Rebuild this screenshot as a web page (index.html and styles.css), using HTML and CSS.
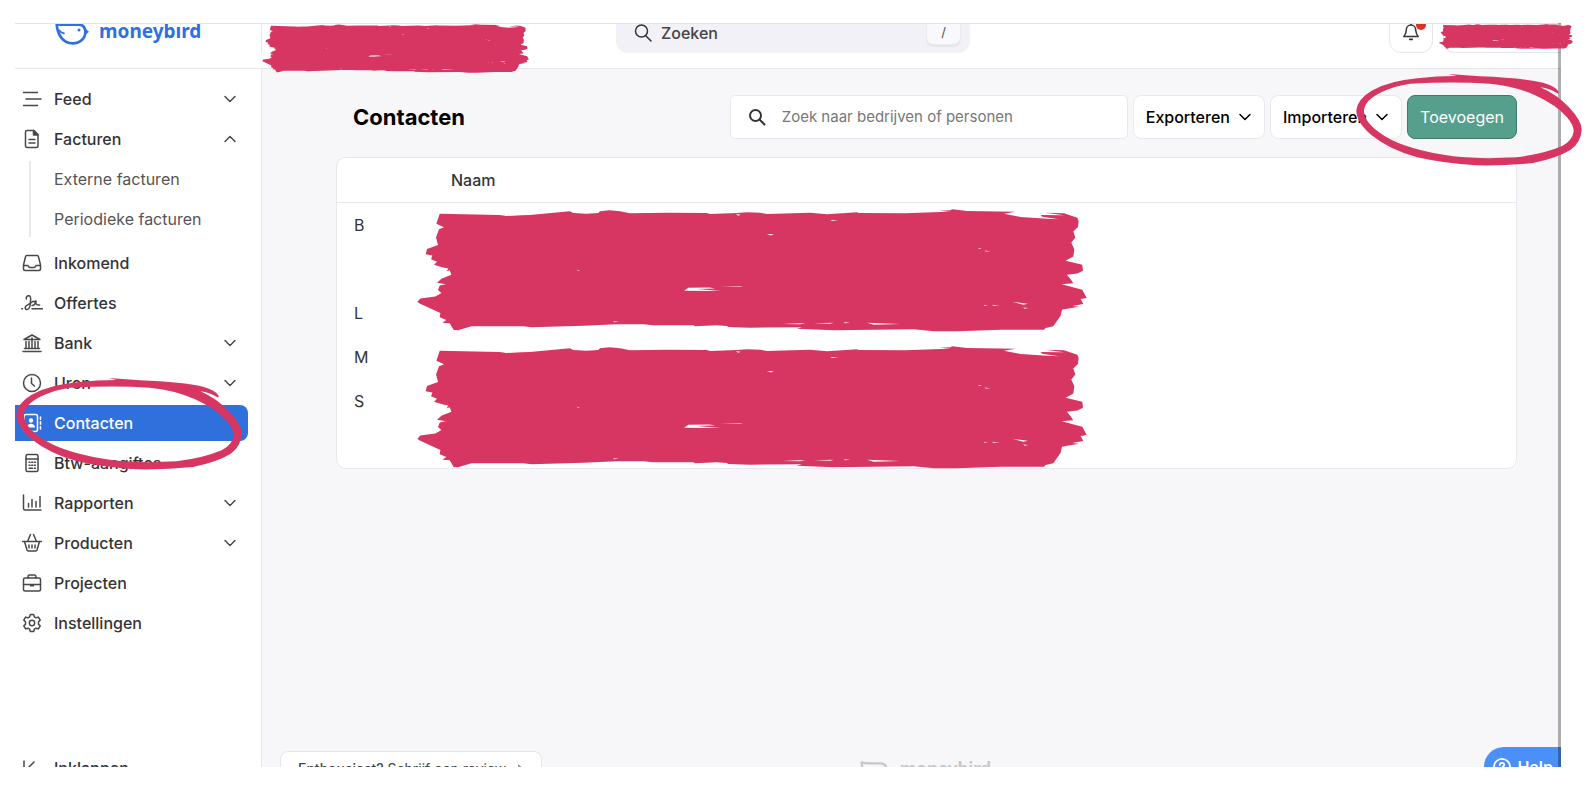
FILE: index.html
```html
<!DOCTYPE html>
<html lang="nl">
<head>
<meta charset="utf-8">
<meta name="viewport" content="width=device-width, initial-scale=1">
<title>Contacten - Moneybird</title>
<link rel="stylesheet" href="styles.css">
</head>
<body>
<svg class="defs" aria-hidden="true">
  <symbol id="bird" viewBox="0 0 102 69">
    <path fill="none" stroke="currentColor" stroke-width="8" stroke-linejoin="round" d="M5 5C18 10 34 8 50 8H70C83 8 90 16 91 27C92 50 75 64 53 64C25 64 7 40 5 5Z"/>
    <path fill="currentColor" d="M91 20L102 29L91 38Z"/>
    <path fill="none" stroke="currentColor" stroke-width="5" stroke-linecap="round" d="M12 24C16 31 21 33 27 34"/>
    <circle cx="72" cy="24" r="4.500" fill="currentColor"/>
  </symbol>
  <symbol id="chev" viewBox="0 0 14 14"><path d="M2 4.500 7 9.500l5-5"/></symbol>
  <symbol id="brush" viewBox="52 54 2007 370" preserveAspectRatio="none">
    <path fill-rule="evenodd" d="M120 68L300 72 320 75 365 73 390 72 510 61 520 66 560 68 595 66 600 61 628 58 660 61 690 67 800 65 920 66 930 69 1010 66 1040 64 1080 65 1100 69 1230 65 1280 70 1370 64 1375 66 1515 67 1620 63 1650 62 1617 59 1650 58 1655 55 1700 60 1845 62 1810 68 1860 78 1940 83 1975 85 1925 77 1920 72 1990 73 1935 65 1990 67 2030 80 2034 90 2032 108 2018 122 2024 140 2012 155 2021 175 2018 197 1995 210 2045 222 2047 240 2030 248 1999 252 2010 265 2018 277 1983 280 2045 297 2058 322 2040 325 2048 340 2015 346 2035 348 2000 354 1984 357 1980 375 1958 407 1935 412 1930 417 1800 417 1670 422 1600 422 1540 416 1300 419 1190 414 1205 410 1050 411 985 409 980 406 950 404 885 407 880 404 760 404 730 401 650 401 550 405 395 410 370 407 215 407 175 419 162 418 150 398 128 396 140 388 120 380 122 367 60 338 53 333 62 323 107 317 125 307 115 298 120 284 138 280 112 276 125 264 155 252 150 238 140 242 146 233 130 230 103 222 112 213 94 205 98 194 78 190 82 174 115 162 109 140 118 115 133 109 110 98Z
    M852 300L865 291 928 290 945 293 890 295 962 301ZM958 286L1028 287 1020 289ZM640 392L656 393 642 395ZM532 237L540 238 534 240ZM1100 129L1121 130 1112 134ZM1145 400L1215 397 1200 401ZM1240 398L1300 396 1290 399ZM1330 395L1350 396 1334 398ZM1400 396L1500 400 1420 402ZM1750 342L1762 344 1752 345ZM1775 342L1798 345 1778 345ZM1835 333L1882 339 1868 342ZM1868 350L1883 352 1872 354ZM1733 171L1744 173 1736 174ZM1752 179L1770 181 1756 182ZM1290 87L1313 88 1296 90ZM1007 69L1022 71 1014 74Z"/>
  </symbol>
  <symbol id="ring" viewBox="78 222 679 276" preserveAspectRatio="none">
    <path fill-rule="evenodd" d="M357 222L450 229Q580 234 640 248Q680 260 687 275Q686 284 682 279Q660 266 632 262Q682 284 718 322Q757 364 756 390Q754 428 722 450Q680 475 610 489Q520 498 440 496Q340 490 262 472Q180 450 125 406Q78 366 79 330Q84 296 125 272Q180 242 262 235Q320 228 380 228ZM240 251Q370 244 480 251Q560 259 616 286Q680 315 712 352Q733 377 732 395Q728 421 696 439Q638 463 560 472Q450 478 370 469Q232 450 165 409Q99 368 102 330Q106 300 154 277Q192 258 240 251Z"/>
  </symbol>
</svg>

<div class="frame">
  <header class="topbar">
    <a class="brand" href="#"><svg class="bird"><use href="#bird"/></svg><span>moneybırd</span></a>
    <label class="quick">
      <svg class="ico" viewBox="0 0 20 20"><circle cx="8.500" cy="8" r="6"/><path d="M12.500 12.500 18 18"/></svg>
      <input type="text" placeholder="Zoeken" aria-label="Zoeken">
      <kbd>/</kbd>
    </label>
    <div class="account">
      <button class="bell" type="button" aria-label="Meldingen">
        <svg class="ico" viewBox="0 0 20 20"><path d="M2 15C4.500 12.500 4.500 10 4.800 7.500a5.200 5.200 0 0 1 10.400 0c.3 2.500.3 5 2.800 7.500ZM8.500 18.200h3M10 .8v1.500"/></svg>
        <span class="dot"></span>
      </button>
      <button class="profile" type="button" aria-label="Profiel"></button>
    </div>
  </header>

  <div class="body">
    <nav class="sidebar">
      <a class="item" href="#"><svg class="ico" viewBox="0 0 20 20"><path d="M1.500 3.500h14M4 10h15M1.500 16.500h14"/></svg>Feed<svg class="chev"><use href="#chev"/></svg></a>
      <a class="item" href="#"><svg class="ico" viewBox="0 0 20 20"><path d="M5 1.500h7l4 4V17a1.500 1.500 0 0 1-1.500 1.500H5A1.500 1.500 0 0 1 3.500 17V3A1.500 1.500 0 0 1 5 1.500ZM7 10.500h6M7 14h6"/><path class="solid" d="M11.500 1.500v4.500H16Z"/></svg>Facturen<svg class="chev up"><use href="#chev"/></svg></a>
      <div class="sub">
        <a class="subitem" href="#">Externe facturen</a>
        <a class="subitem" href="#">Periodieke facturen</a>
      </div>
      <a class="item" href="#"><svg class="ico" viewBox="0 0 20 20"><path d="M5 2.500h10a1.500 1.500 0 0 1 1.500 1.200L18.500 12v4a1.500 1.500 0 0 1-1.500 1.500H3A1.500 1.500 0 0 1 1.500 16v-4l2-8.300A1.500 1.500 0 0 1 5 2.500ZM1.500 12.500h4c1 0 1 2 2.500 2h4c1.500 0 1.500-2 2.500-2h4"/></svg>Inkomend</a>
      <a class="item" href="#"><svg class="ico wide" viewBox="0 0 22 20"><path d="M5.500 6C4.500 4 6.500 2.300 8.300 2.800c2.400.7 1.200 4.200 1 7.200-.2 4-1.300 6.500-3.300 6.500-1.800 0-2.300-1.800-1.200-3.200C6.500 11.200 10 10.500 12 8.200M11 12.500c3 0 3.500-1.700 4-4.500l-2 .8M15 8.500c-.5 2.500.5 3.800 3.500 3.500M11 15.800h10.500M.7 15.800h.8"/></svg>Offertes</a>
      <a class="item" href="#"><svg class="ico" viewBox="0 0 20 20"><path d="M2 6.500 10 2l8 4.500ZM4 8.500v6.500M7 8.500v6.500M10 5v10M13 8.500v6.500M16 8.500v6.500M2.500 15.500h15M1 18.500h18"/></svg>Bank<svg class="chev"><use href="#chev"/></svg></a>
      <a class="item" href="#"><svg class="ico" viewBox="0 0 20 20"><circle cx="10" cy="10" r="8.500"/><path d="M9.500 5v5.500l3 2.500"/></svg>Uren<svg class="chev"><use href="#chev"/></svg></a>
      <a class="item active" href="#" aria-current="page"><svg class="ico" viewBox="0 0 20 20"><rect x="2" y="1.500" width="13.500" height="17" rx="2"/><circle class="fill" cx="9" cy="7.500" r="2.200"/><path class="fill" d="M5 14.500c0-5 8-5 8 0Z"/><path d="M18.500 4v2.500M18.500 8.800v2.500M18.500 13.500V16"/></svg>Contacten</a>
      <a class="item" href="#"><svg class="ico" viewBox="0 0 20 20"><rect x="4" y="1.500" width="12" height="17" rx="1.500"/><path d="M4 6h12M7 9.200h1M9.700 9.200h1M12.400 9.200h1M7 12.200h1M9.700 12.200h1M12.400 12.200h1M7 15.200h3.500M12.400 15.200h1"/></svg>Btw-aangiftes</a>
      <a class="item" href="#"><svg class="ico" viewBox="0 0 20 20"><path d="M1.500 2v13.500a1.500 1.500 0 0 0 1.500 1.500h16M6.500 10.500V14M10 6.500V14M14 8.500V14M18 3.500V14"/></svg>Rapporten<svg class="chev"><use href="#chev"/></svg></a>
      <a class="item" href="#"><svg class="ico" viewBox="0 0 20 20"><path d="M.5 8.500h19M2.500 8.500l2.500 8.500a1.500 1.500 0 0 0 1.300 1h7.400a1.500 1.500 0 0 0 1.300-1l2.500-8.500M5.500 8.500l3-7M14.500 8.500l-3-7M7 12v3M10 12v3M13 12v3"/></svg>Producten<svg class="chev"><use href="#chev"/></svg></a>
      <a class="item" href="#"><svg class="ico" viewBox="0 0 20 20"><rect x="1.500" y="5" width="17" height="13" rx="1.500"/><path d="M6 5V3.500A1.500 1.500 0 0 1 7.500 2h5A1.500 1.500 0 0 1 14 3.500V5M1.500 11.500h17"/><path class="fill" d="M8 11.500h4v2H8Z"/></svg>Projecten</a>
      <a class="item" href="#"><svg class="ico" viewBox="0 0 20 20"><circle cx="10" cy="10" r="2.700"/><path d="M8.300 1.500h3.400l.6 2.300 1.800 1 2.300-.7 1.800 3-1.700 1.700v2.400l1.700 1.700-1.800 3-2.300-.7-1.800 1-.6 2.300H8.300l-.6-2.300-1.800-1-2.300.7-1.800-3 1.700-1.700V8.800L1.800 7.100l1.800-3 2.300.7 1.800-1Z"/></svg>Instellingen</a>
      <button class="item collapse" type="button"><svg class="ico" viewBox="0 0 20 20"><path d="M2 3v14M17.500 10h-11M12 4 6 10l6 6"/></svg>Inklappen</button>
    </nav>

    <main class="main">
      <div class="content">
        <div class="toolbar">
          <h1>Contacten</h1>
          <label class="search">
            <svg class="ico" viewBox="0 0 20 20"><circle cx="8.500" cy="8.500" r="5.500"/><path d="M12.500 12.500 17.500 17.500"/></svg>
            <input type="text" placeholder="Zoek naar bedrijven of personen" aria-label="Zoek naar bedrijven of personen">
          </label>
          <button class="btn" type="button">Exporteren<svg class="chev"><use href="#chev"/></svg></button>
          <button class="btn" type="button">Importeren<svg class="chev"><use href="#chev"/></svg></button>
          <button class="btn primary" type="button">Toevoegen</button>
        </div>
        <div class="card">
          <table>
            <thead><tr><th class="letter"></th><th>Naam</th></tr></thead>
            <tbody>
              <tr><td>B</td><td></td></tr>
              <tr><td></td><td></td></tr>
              <tr><td>L</td><td></td></tr>
              <tr><td>M</td><td></td></tr>
              <tr><td>S</td><td></td></tr>
              <tr><td></td><td></td></tr>
            </tbody>
          </table>
          <svg class="mark rows-a"><use href="#brush"/></svg>
          <svg class="mark rows-b"><use href="#brush"/></svg>
        </div>
      </div>
      <footer class="footer">
        <a class="review" href="#"><span><b>Enthousiast?</b> Schrijf een review</span><svg viewBox="0 0 6 10"><path d="M0 0 6 5 0 10Z"/></svg></a>
        <div class="brand muted"><svg class="bird"><use href="#bird"/></svg><span>moneybird</span></div>
        <button class="help" type="button"><svg class="ico" viewBox="0 0 20 20"><circle cx="10" cy="10" r="9"/><path d="M7.500 8c0-3.500 5-3.500 5-.5 0 2-2.500 2-2.500 4M10 14v1"/></svg>Help</button>
      </footer>
    </main>
  </div>

  <svg class="mark org"><use href="#brush"/></svg>
  <svg class="mark user"><use href="#brush"/></svg>
  <svg class="mark ring-nav"><use href="#ring"/></svg>
  <svg class="mark ring-add"><use href="#ring"/></svg>
</div>
</body>
</html>
```
FILE: styles.css
```css
* { box-sizing: border-box; }

body {
  margin: 0;
  height: 100vh;
  padding: 23px 27px 19px 15px;
  background: #fff;
  color: #343437;
  font: 500 16px/24px Inter, "Liberation Sans", sans-serif;
}

a { color: inherit; text-decoration: none; }
button, input { font: inherit; color: inherit; }
button { cursor: pointer; }
.defs { position: absolute; width: 0; height: 0; }

.ico {
  flex: none;
  width: 20px;
  height: 20px;
  fill: none;
  stroke: currentColor;
  stroke-width: 1.5;
  stroke-linecap: round;
  stroke-linejoin: round;
}
.ico.wide { width: 22px; margin: 0 -1px; }
.ico .solid { fill: currentColor; }
.ico .fill { fill: currentColor; stroke: none; }

.chev {
  flex: none;
  width: 14px;
  height: 14px;
  fill: none;
  stroke: currentColor;
  stroke-width: 1.5;
  stroke-linecap: round;
  stroke-linejoin: round;
}
.chev.up { transform: rotate(180deg); }

.frame {
  position: relative;
  display: flex;
  flex-direction: column;
  height: 100%;
}
.frame::after {
  content: "";
  position: absolute;
  top: 0;
  right: 0;
  bottom: 0;
  width: 3px;
  background: rgba(0, 0, 0, .3);
}

/* Top bar */
.topbar {
  flex: none;
  display: grid;
  grid-template-columns: 247px 354px minmax(0, 354px) 1fr;
  align-content: end;
  height: 46px;
  padding-bottom: 15px;
  border-top: 1px solid #e3e3e5;
  border-bottom: 1px solid #e6e6e9;
  overflow: hidden;
}
.brand {
  display: flex;
  align-items: center;
  gap: 10px;
  color: #2f70e0;
  font: 700 19px/24px "Noto Sans", sans-serif;
}
.topbar .brand {
  height: 44px;
  padding: 0 0 0 40px;
  border-right: 1px solid #e6e6e9;
}
.bird { width: 34px; height: 23px; margin-top: 4px; }
.quick {
  grid-column: 3;
  display: flex;
  align-items: center;
  height: 44px;
  padding: 4px 9px 0 17px;
  border-radius: 12px;
  background: #f2f1f7;
}
.quick input {
  flex: 1;
  min-width: 0;
  margin-left: 8px;
  padding: 0;
  border: 0;
  outline: 0;
  background: none;
}
input::placeholder { color: #444; opacity: 1; }
kbd {
  width: 35px;
  height: 28px;
  margin-bottom: 4px;
  border: 1px solid #ececf0;
  border-radius: 8px;
  background: #f9f9fb;
  box-shadow: 0 2px 1px #e6e6ea;
  color: #555;
  font: 400 13px/28px Inter, sans-serif;
  text-align: center;
}
.account {
  display: flex;
  justify-content: flex-end;
  gap: 10px;
}
.bell, .profile {
  position: relative;
  width: 44px;
  height: 44px;
  padding: 8px 0 0;
  border: 1px solid #e6e6e9;
  border-radius: 12px;
  background: #fff;
}
.profile { width: 118px; border-right: 0; border-radius: 12px 0 0 12px; }
.bell .ico { width: 18px; height: 18px; stroke-width: 1.7; }
.dot {
  position: absolute;
  top: 10px;
  right: 6px;
  width: 10px;
  height: 10px;
  border-radius: 50%;
  background: #e03020;
}

.body { flex: 1; display: flex; min-height: 0; }

/* Sidebar */
.sidebar {
  flex: none;
  display: flex;
  flex-direction: column;
  gap: 4px;
  width: 247px;
  padding: 12px 13px 0 0;
  border-right: 1px solid #e6e6e9;
  overflow: hidden;
}
.item {
  flex: none;
  display: flex;
  align-items: center;
  gap: 12px;
  height: 36px;
  padding: 0 11px 0 7px;
  border-radius: 0 8px 8px 0;
}
.item .ico, .item .chev { color: #48484b; }
.item .chev { margin-left: auto; }
.item.active { background: #3070dc; color: #fff; }
.item.active .ico { color: #fff; }
.sub {
  display: flex;
  flex-direction: column;
  gap: 4px;
  margin: 0 0 4px 14px;
  border-left: 2px solid #e9e9ec;
}
.subitem {
  height: 36px;
  padding-left: 23px;
  color: #555;
  font-weight: 400;
  line-height: 36px;
}
.collapse {
  margin: auto 0 -19px;
  border: 0;
  background: none;
}

/* Main column */
.main {
  flex: 1;
  display: flex;
  flex-direction: column;
  min-width: 0;
  background: #f7f7fa;
  overflow: hidden;
}
.content { padding: 26px 44px 0 74px; }
.toolbar {
  display: flex;
  align-items: center;
  gap: 5px;
  margin-bottom: 18px;
}
h1 {
  flex: 1;
  margin: 0 0 0 17px;
  color: #000;
  font-size: 22px;
  font-weight: 700;
  line-height: 28px;
}
.search {
  display: flex;
  align-items: center;
  gap: 15px;
  width: 398px;
  height: 44px;
  padding: 0 16px;
  border: 1px solid #e9e9ed;
  border-radius: 5px;
  background: #fff;
}
.search .ico { stroke-width: 2; }
.search input {
  flex: 1;
  min-width: 0;
  padding: 0;
  border: 0;
  outline: 0;
  background: none;
  font-size: 15px;
  font-weight: 400;
}
.search input::placeholder { color: #777; }
.btn {
  display: flex;
  align-items: center;
  gap: 8px;
  height: 44px;
  padding: 0 12px;
  border: 1px solid #e9e9ed;
  border-radius: 8px;
  background: #fff;
  color: #000;
}
.btn.primary {
  padding: 0 12px;
  border-color: #3f7a6b;
  background: #579f8d;
  color: #fff;
  font-weight: 400;
}

.card {
  position: relative;
  padding-bottom: 2px;
  border: 1px solid #e9e9ed;
  border-radius: 10px;
  background: #fff;
}
table { width: 100%; border-collapse: collapse; }
th, td { height: 44px; padding: 0; text-align: left; vertical-align: middle; }
th { font-weight: 500; border-bottom: 1px solid #e9e9ed; }
td { padding-top: 2px; font-weight: 400; }
td:first-child { padding-left: 17px; }
.letter { width: 114px; }

/* Footer strip */
.footer {
  flex: none;
  display: flex;
  align-items: flex-start;
  height: 20px;
  margin-top: auto;
  padding-left: 18px;
}
.review {
  display: flex;
  align-items: center;
  justify-content: space-between;
  width: 262px;
  height: 36px;
  margin-top: 4px;
  padding: 0 17px;
  border: 1px solid #e6e6ec;
  border-radius: 8px;
  background: #fff;
  color: #444;
  font-size: 14px;
  font-weight: 400;
}
.review b { font-weight: 500; }
.review svg { width: 6px; height: 12px; fill: #999; }
.brand.muted {
  gap: 10px;
  margin: 10px 0 0 24.8%;
  color: #c8c8cb;
  font-size: 17px;
}
.muted .bird { width: 30px; height: 20px; }
.help {
  display: flex;
  align-items: center;
  gap: 6px;
  height: 40px;
  margin-left: auto;
  padding: 0 8px 0 9px;
  border: 0;
  border-radius: 20px 0 0 20px;
  background: #4a90f8;
  color: #fff;
  font-weight: 600;
}
.help .ico { width: 18px; stroke-width: 2; }

/* Marker strokes lying over the page */
.mark { position: absolute; z-index: 2; fill: #d83662; pointer-events: none; }
.rows-a, .rows-b { left: 80px; width: 670px; height: 123px; }
.rows-a { top: 51px; }
.rows-b { top: 188px; }
.org { top: 1px; left: 247px; width: 267px; height: 49px; }
.user { top: 1px; right: -12px; width: 134px; height: 25px; }
.ring-nav, .ring-add { width: 226px; height: 92px; }
.ring-nav { top: 355px; left: 1px; }
.ring-add { top: 51px; right: -21px; }
```
